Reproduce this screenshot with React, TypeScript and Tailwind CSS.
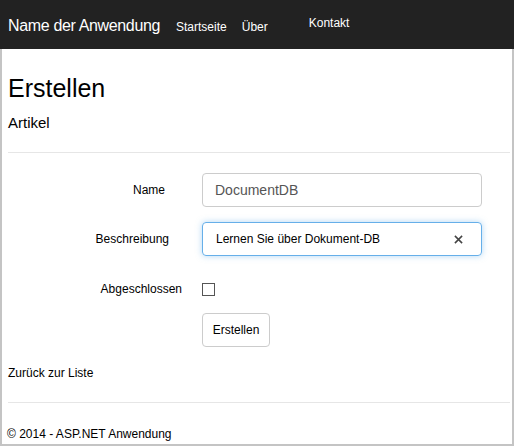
import React from "react";

const font = { fontFamily: '"Liberation Sans", Arial, sans-serif' };

export default function App() {
  return (
    <div className="w-[514px] h-[447px] overflow-hidden bg-white text-black" style={font}>
      <nav className="h-[49px] bg-[#222222] flex items-start text-white">
        <span className="ml-[8px] mt-[16px] text-[16px] leading-[20px] tracking-[-0.35px]">Name der Anwendung</span>
        <span className="ml-[16px] mt-[19px] text-[12px] leading-[16px]">Startseite</span>
        <span className="ml-[15px] mt-[19px] text-[12px] leading-[16px]">Über</span>
        <span className="ml-[41px] mt-[15px] text-[12px] leading-[16px]">Kontakt</span>
      </nav>
      <div className="h-[397px] border-l-2 border-r-2 border-b-2 border-[#c4c4c4] pl-[6px] pr-[2px] flex flex-col">
        <h1 className="mt-[24px] text-[25px] leading-[30px]">Erstellen</h1>
        <h4 className="mt-[11px] text-[15px] leading-[18px]">Artikel</h4>
        <hr className="mt-[20px] border-t border-[#e6e6e6]" />

        <div className="mt-[20px] flex flex-col">
          <div className="flex items-center">
            <label className="w-[157px] text-right text-[12px] leading-[18px]">Name</label>
            <div className="ml-[37px] w-[280px] h-[34px] border border-[#cccccc] rounded-[4px] flex items-center px-[12px] text-[14px] text-[#555555]">
              DocumentDB
            </div>
          </div>
          <div className="flex items-center mt-[15px]">
            <label className="w-[161px] text-right text-[12px] leading-[18px]">Beschreibung</label>
            <div className="ml-[33px] w-[280px] h-[34px] border border-[#66afe9] rounded-[4px] flex items-center justify-between pl-[13px] pr-[18px] text-[12px] shadow-[0_0_6px_rgba(102,175,233,0.5)]">
              <span>Lernen Sie über Dokument-DB</span>
              <svg width="9" height="9" viewBox="0 0 10 10">
                <path d="M1 1L9 9M9 1L1 9" stroke="#444" strokeWidth="1.7" />
              </svg>
            </div>
          </div>
          <div className="flex items-center mt-[24px]">
            <label className="w-[174px] text-right text-[12px] leading-[18px]">Abgeschlossen</label>
            <div className="ml-[20px] w-[13px] h-[13px] border border-[#555555] bg-white" />
          </div>
          <div className="flex mt-[15px]">
            <button className="ml-[194px] w-[68px] h-[34px] border border-[#cccccc] rounded-[4px] text-[12px] bg-white">
              Erstellen
            </button>
          </div>
        </div>

        <p className="mt-[17px] text-[12px] leading-[18px]">Zurück zur Liste</p>
        <hr className="mt-[20px] border-t border-[#e6e6e6]" />
        <p className="mt-[22px] -ml-[1px] text-[12px] leading-[18px]">© 2014 - ASP.NET Anwendung</p>
      </div>
    </div>
  );
}
